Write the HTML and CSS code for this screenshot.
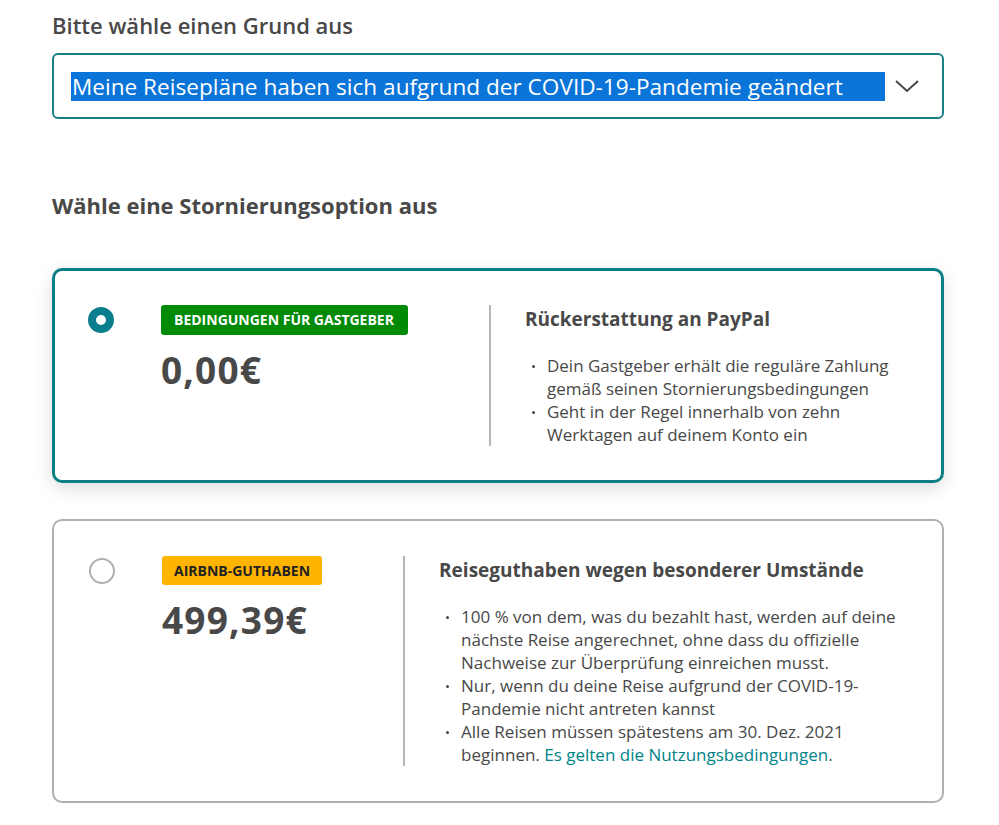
FILE: index.html
```html
<!DOCTYPE html>
<html lang="de">
<head>
<meta charset="utf-8">
<title>Stornierung</title>
<link rel="stylesheet" href="styles.css">
</head>
<body>
<main class="page">
  <h2 class="label">Bitte wähle einen Grund aus</h2>
  <div class="select">
    <span class="select-value">Meine Reisepläne haben sich aufgrund der COVID-19-Pandemie geändert</span>
    <svg class="chevron" width="26" height="16" viewBox="0 0 26 16"><path d="M2 3 L13 13 L24 3" fill="none" stroke="#484848" stroke-width="2"/></svg>
  </div>

  <h2 class="section-title">Wähle eine Stornierungsoption aus</h2>

  <div class="card card-selected">
    <div class="radio radio-on"></div>
    <div class="amount-col">
      <span class="badge badge-green">BEDINGUNGEN FÜR GASTGEBER</span>
      <div class="price">0,00€</div>
    </div>
    <div class="info-col">
      <h3 class="info-title">Rückerstattung an PayPal</h3>
      <ul class="info-list">
        <li>Dein Gastgeber erhält die reguläre Zahlung gemäß seinen Stornierungsbedingungen</li>
        <li>Geht in der Regel innerhalb von zehn Werktagen auf deinem Konto ein</li>
      </ul>
    </div>
  </div>

  <div class="card">
    <div class="radio"></div>
    <div class="amount-col">
      <span class="badge badge-yellow">AIRBNB-GUTHABEN</span>
      <div class="price">499,39€</div>
    </div>
    <div class="info-col">
      <h3 class="info-title">Reiseguthaben wegen besonderer Umstände</h3>
      <ul class="info-list">
        <li>100&nbsp;% von dem, was du bezahlt hast, werden auf deine nächste Reise angerechnet, ohne dass du offizielle Nachweise zur Überprüfung einreichen musst.</li>
        <li>Nur, wenn du deine Reise aufgrund der COVID-19-Pandemie nicht antreten kannst</li>
        <li>Alle Reisen müssen spätestens am 30. Dez. 2021 beginnen. <a class="link" href="#">Es gelten die Nutzungsbedingungen</a>.</li>
      </ul>
    </div>
  </div>
</main>
</body>
</html>
```

FILE: styles.css
```css
* { box-sizing: border-box; }
html, body { margin: 0; padding: 0; background: #fff; }
body {
  font-family: "Open Sans", "Noto Sans", sans-serif;
  color: #484848;
}
.page {
  width: 892px;
  margin-left: 52px;
  padding-top: 11px;
}
.label {
  margin: 0;
  font-size: 22px;
  line-height: 28px;
  font-weight: 600;
}
.select {
  margin-top: 14px;
  height: 66px;
  border: 2px solid #1d7f86;
  border-radius: 6px;
  display: flex;
  align-items: center;
  padding: 0 22px 0 17px;
}
.select-value {
  width: 814px;
  background: #0a74d8;
  color: #fff;
  font-size: 22.6px;
  line-height: 29px;
  padding-left: 1px;
  white-space: nowrap;
}
.chevron { margin-left: auto; }
.section-title {
  margin: 72px 0 0;
  font-size: 22px;
  line-height: 28px;
  font-weight: 700;
}
.card {
  display: flex;
  align-items: stretch;
  border: 2px solid #b0b0b0;
  border-radius: 10px;
  padding: 35px 46px 35px 35px;
  margin-top: 36px;
}
.card-selected {
  margin-top: 49px;
  border: 3px solid #0b7f85;
  padding: 34px 46px 34px 33px;
  box-shadow: 0 6px 18px rgba(0,0,0,0.13);
}
.radio {
  flex: none;
  width: 26px;
  height: 26px;
  margin-top: 2px;
  border-radius: 50%;
  border: 2px solid #b0b0b0;
}
.radio-on {
  border: 8px solid #0a7e8c;
}
.amount-col {
  margin-left: 47px;
  margin-right: 81px;
}
.badge {
  display: inline-block;
  font-size: 14px;
  line-height: 30px;
  font-weight: 700;
  padding: 0 14px 0 13px;
  border-radius: 3px;
}
.badge-green { background: #008a05; color: #fff; }
.badge-yellow { background: #ffb400; color: #222; line-height: 29px; padding: 0 12px; }
.price {
  margin-top: 12px;
  font-size: 37px;
  line-height: 46px;
  font-weight: 700;
  letter-spacing: 1.2px;
  color: #484848;
}
.info-col {
  flex: 1;
  border-left: 2px solid #b6b6b6;
  padding-left: 34px;
}
.info-title {
  margin: 0;
  font-size: 19px;
  line-height: 28px;
  font-weight: 700;
}
.info-list {
  margin: 21px 0 0;
  padding: 0;
  list-style: none;
  font-size: 17px;
  line-height: 23px;
}
.info-list li {
  position: relative;
  padding-left: 22px;
}
.info-list li::before {
  content: "";
  position: absolute;
  left: 7px;
  top: 11px;
  width: 3px;
  height: 3px;
  border-radius: 50%;
  background: #484848;
}
.link { color: #008489; text-decoration: none; }
```
